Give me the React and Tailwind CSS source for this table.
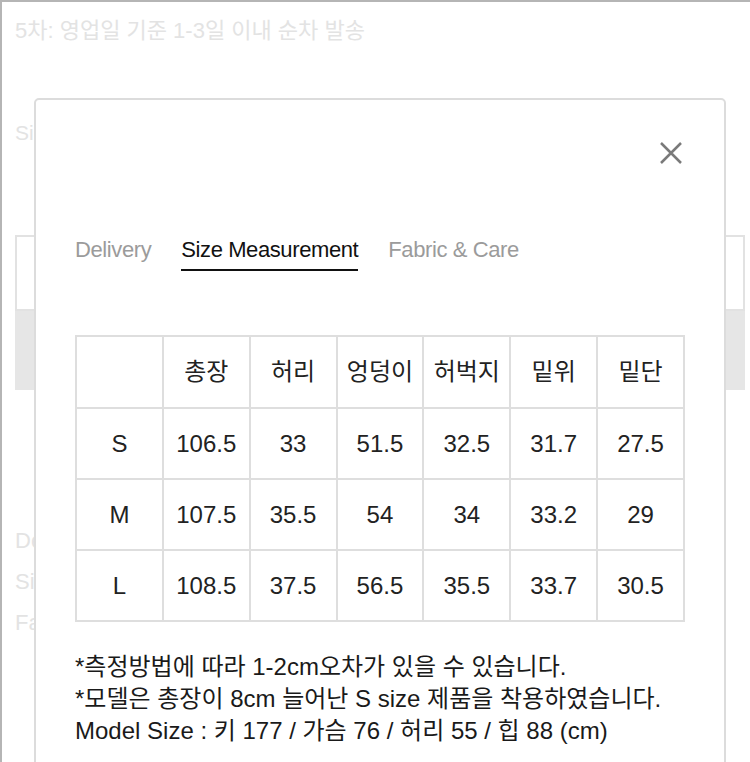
import React from "react";

const font = { fontFamily: '"Liberation Sans", "Noto Sans CJK KR", sans-serif' };

const headers = ["", "총장", "허리", "엉덩이", "허벅지", "밑위", "밑단"];
const rows = [
  ["S", "106.5", "33", "51.5", "32.5", "31.7", "27.5"],
  ["M", "107.5", "35.5", "54", "34", "33.2", "29"],
  ["L", "108.5", "37.5", "56.5", "35.5", "33.7", "30.5"],
];

export default function App() {
  return (
    <div
      className="relative w-[750px] h-[762px] overflow-hidden bg-white border-t-2 border-l-2 border-[#b5b5b5]"
      style={font}
    >
      {/* background page */}
      <div className="flex flex-col pl-[13px] text-[#e3e3e3]">
        <div className="mt-[16px] text-[22px] leading-[26px]">5차: 영업일 기준 1-3일 이내 순차 발송</div>
        <div className="mt-[76px] text-[21px] leading-[26px]">Size Measurement</div>
        <div className="mt-[89px] mr-[5px] h-[76px] border-2 border-[#e2e2e2]"></div>
        <div className="mr-[5px] h-[79px] bg-[#e6e6e6]"></div>
        <div className="mt-[138px] flex flex-col gap-[15px] text-[22px] leading-[26px]">
          <div>Delivery</div>
          <div>Size Measurement</div>
          <div>Fabric &amp; Care</div>
        </div>
      </div>

      {/* modal */}
      <div className="absolute left-[32px] top-[96px] w-[692px] h-[700px] bg-white border-2 border-[#dcdcdc] rounded-[5px]">
        <button className="absolute left-[622px] top-[40px] w-[26px] h-[26px] flex items-center justify-center">
          <svg width="24" height="24" viewBox="0 0 24 24" fill="none" stroke="#7a7a7a" strokeWidth="2.5">
            <path d="M2 2 L22 22 M22 2 L2 22" />
          </svg>
        </button>

        <div className="pl-[39px] pt-[137px] flex gap-[30px] text-[22px] leading-[26px] tracking-[-0.4px]">
          <div className="text-[#9b9b9b]">Delivery</div>
          <div className="text-[#111] border-b-2 border-[#111] pb-[6px]">Size Measurement</div>
          <div className="text-[#9b9b9b]">Fabric &amp; Care</div>
        </div>

        <div className="pl-[39px] pt-[64px]">
          <table className="table-fixed w-[610px] border-collapse text-[24px] text-[#222]">
            <tbody>
              <tr className="h-[72px]">
                {headers.map((h, i) => (
                  <td key={i} className="border-2 border-[#dedede] text-center">{h}</td>
                ))}
              </tr>
              {rows.map((r) => (
                <tr key={r[0]} className="h-[71px]">
                  {r.map((c, i) => (
                    <td key={i} className="border-2 border-[#dedede] text-center">{c}</td>
                  ))}
                </tr>
              ))}
            </tbody>
          </table>
        </div>

        <div className="pl-[39px] pt-[29px] text-[24px] leading-[32px] text-[#1a1a1a]">
          <div>*측정방법에 따라 1-2cm오차가 있을 수 있습니다.</div>
          <div>*모델은 총장이 8cm 늘어난 S size 제품을 착용하였습니다.</div>
          <div>Model Size : 키 177 / 가슴 76 / 허리 55 / 힙 88 (cm)</div>
        </div>
      </div>
    </div>
  );
}
